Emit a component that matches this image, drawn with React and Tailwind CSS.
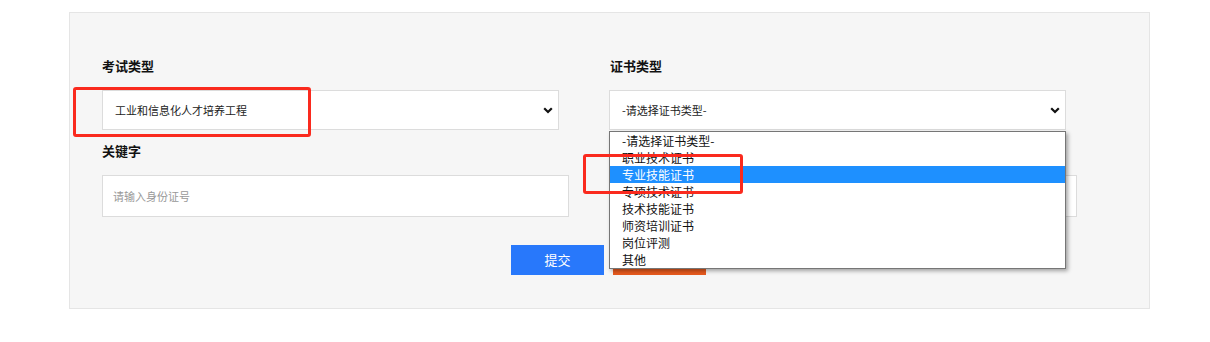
const options = [
  '-请选择证书类型-',
  '职业技术证书',
  '专业技能证书',
  '专项技术证书',
  '技术技能证书',
  '师资培训证书',
  '岗位评测',
  '其他'
];

function Chevron() {
  return (
    <svg width="10" height="7" viewBox="0 0 10 7" className="shrink-0">
      <path d="M1.2 1.2 L5 5 L8.8 1.2" fill="none" stroke="#111" strokeWidth="2.2" />
    </svg>
  );
}

function FakeSelect({ value }) {
  return (
    <div className="flex h-[40px] w-[457px] items-center justify-between border border-[#dcdcdc] bg-white pl-[12px] pr-[5px] text-[11px] text-[#222]">
      <span>{value}</span>
      <Chevron />
    </div>
  );
}

function Label({ children }) {
  return <div className="h-[16px] text-[13px] font-bold leading-[16px] text-[#111]">{children}</div>;
}

export default function App() {
  return (
    <div
      className="min-h-screen bg-white pl-[69px] pt-[12px]"
      style={{ fontFamily: '"Noto Sans CJK SC", "Noto Sans", sans-serif' }}
    >
      <div className="relative h-[297px] w-[1081px] border border-[#e5e5e5] bg-[#f6f6f6] pl-[32px] pt-[45px]">
        <div className="flex">
          <div className="w-[507px]">
            <Label>考试类型</Label>
            <div className="mt-[16px]">
              <FakeSelect value="工业和信息化人才培养工程" />
            </div>
            <div className="mt-[13px]">
              <Label>关键字</Label>
            </div>
            <div className="mt-[16px] flex h-[42px] w-[467px] items-center border border-[#dcdcdc] bg-white pl-[10px] text-[11px] text-[#999]">
              请输入身份证号
            </div>
          </div>
          <div className="w-[470px]">
            <div className="pl-[1px]">
              <Label>证书类型</Label>
            </div>
            <div className="relative mt-[16px]">
              <FakeSelect value="-请选择证书类型-" />
              <div className="absolute left-0 top-[41px] z-10 w-[457px] border border-[#767676] bg-white shadow-[2px_2px_4px_rgba(0,0,0,0.35)]">
                {options.map((o, i) => (
                  <div
                    key={o}
                    className={`h-[17px] pl-[12px] text-[12px] leading-[17px] ${
                      i === 2 ? 'bg-[#1e90ff] text-white' : 'text-[#111]'
                    }`}
                  >
                    {o}
                  </div>
                ))}
              </div>
            </div>
            <div className="mt-[13px]">
              <Label>&nbsp;</Label>
            </div>
            <div className="mt-[16px] ml-[1px] h-[42px] w-[467px] border border-[#dcdcdc] bg-white" />
          </div>
        </div>

        <div className="mt-[28px] flex justify-center gap-[9px] pr-[34px]">
          <button type="button" className="h-[30px] w-[93px] bg-[#2878fb] text-[13px] text-white">
            提交
          </button>
          <button type="button" className="h-[30px] w-[93px] bg-[#e85a1e] text-[13px] text-white">
            重置
          </button>
        </div>

        <div className="pointer-events-none absolute left-[3px] top-[74px] z-20 h-[50px] w-[238px] rounded-[3px] border-[3px] border-[#fa2a1e]" />
        <div className="pointer-events-none absolute left-[513px] top-[141px] z-20 h-[40px] w-[160px] rounded-[3px] border-[3px] border-[#fa2a1e]" />
      </div>
    </div>
  );
}
